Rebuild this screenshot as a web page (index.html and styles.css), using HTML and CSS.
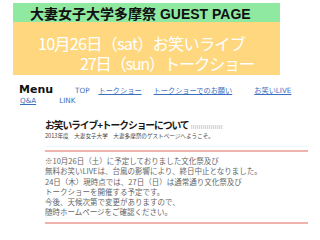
FILE: index.html
```html
<!DOCTYPE html>
<html lang="ja">
<head>
<meta charset="utf-8">
<title>大妻女子大学多摩祭 GUEST PAGE</title>
<link rel="stylesheet" href="styles.css">
</head>
<body>
<header class="banner">
  <h1 class="banner-title">大妻女子大学多摩祭 GUEST PAGE</h1>
  <div class="banner-sub">
    <p class="sub-line sub-line1">10月26日（sat）お笑いライブ</p>
    <p class="sub-line sub-line2">27日（sun）トークショー</p>
  </div>
</header>
<nav class="menu">
  <span class="menu-label">Menu</span>
  <a class="link link-top" href="#">TOP</a>
  <a class="link link-talk u" href="#">トークショー</a>
  <a class="link link-req u" href="#">トークショーでのお願い</a>
  <a class="link link-live u" href="#">お笑いLIVE</a>
  <span class="menu-break"></span>
  <a class="link link-qa u" href="#">Q&amp;A</a>
  <a class="link link-link" href="#">LINK</a>
</nav>
<main class="content">
  <div class="content-head">
    <h2 class="content-title">お笑いライブ+トークショーについて</h2>
    <span class="dots"></span>
  </div>
  <p class="content-sub">2013年度　大妻女子大学　大妻多摩祭のゲストページへようこそ。</p>
  <div class="notice">
    <p>※10月26日（土）に予定しておりました文化祭及び<br>無料お笑いLIVEは、台風の影響により、終日中止となりました。<br>24日（木）現時点では、27日（日）は通常通り文化祭及び<br>トークショーを開催する予定です。<br>今後、天候次第で変更がありますので、<br>随時ホームページをご確認ください。</p>
  </div>
</main>
</body>
</html>
```
FILE: styles.css
```css
* { box-sizing: border-box; }
html, body { margin: 0; padding: 0; background: #fff; }
body {
  font-family: "Noto Sans CJK JP", "DejaVu Sans", sans-serif;
  width: 320px;
  height: 240px;
  overflow: hidden;
}
p, h1, h2 { margin: 0; }

.banner {
  margin: 3px 0 0 13px;
  width: 267px;
}
.banner-title {
  background: #8fe9a1;
  height: 19px;
  padding: 1px 0 0 17px;
  font-family: "Liberation Sans", "Noto Sans CJK JP", sans-serif;
  font-weight: bold;
  font-size: 14px;
  line-height: 20px;
  color: #111;
  white-space: nowrap;
}
.banner-sub {
  background: #fed77f;
  height: 53px;
  padding-top: 11px;
  color: #fff;
  font-size: 16.3px;
  letter-spacing: -0.85px;
  line-height: 20px;
  white-space: nowrap;
}
.sub-line1 { padding-left: 25px; }
.sub-line2 { padding-left: 67px; letter-spacing: -1.3px; }

.menu {
  display: flex;
  flex-wrap: wrap;
  align-items: baseline;
  padding: 9px 0 0 19px;
  width: 320px;
  font-family: "DejaVu Sans", "Noto Sans CJK JP", sans-serif;
}
.menu-label {
  font-weight: bold;
  font-size: 11px;
  line-height: 12px;
  color: #111;
  margin-right: 22px;
}
.menu-break {
  flex-basis: 100%;
  height: 0;
}
.link {
  font-size: 7.2px;
  line-height: 10px;
  color: #3c6fbf;
  text-decoration: none;
  white-space: nowrap;
}
.link.u { text-decoration: underline; }
.link-top { margin-right: 9px; }
.link-talk { margin-right: 12px; }
.link-req { margin-right: 22px; }
.link-qa { margin-left: 1px; margin-right: 23px; }

.content {
  margin: 13px 0 0 45px;
  width: 263px;
}
.content-head {
  display: flex;
  align-items: center;
  height: 13px;
}
.content-title {
  font-size: 9.8px;
  font-weight: bold;
  letter-spacing: -1.1px;
  color: #1a1a1a;
  line-height: 13px;
  white-space: nowrap;
}
.dots {
  width: 32px;
  height: 4px;
  margin-left: 2px;
  margin-top: 2px;
  background-image: repeating-linear-gradient(90deg, #d8d8d8 0 1px, #f2f2f2 1px 2px);
}
.content-sub {
  margin-top: 0;
  font-size: 5.6px;
  line-height: 8px;
  color: #444;
  white-space: nowrap;
}
.notice {
  margin-top: 6px;
  border-top: 1px solid #eef6fb;
  padding-top: 3px;
}
.notice p {
  border-top: 2px solid #f0b2ac;
  border-bottom: 2px solid #f0b2ac;
  padding: 4px 0 4px 0;
  font-size: 7.5px;
  line-height: 10.3px;
  color: #666;
  white-space: nowrap;
}
```
